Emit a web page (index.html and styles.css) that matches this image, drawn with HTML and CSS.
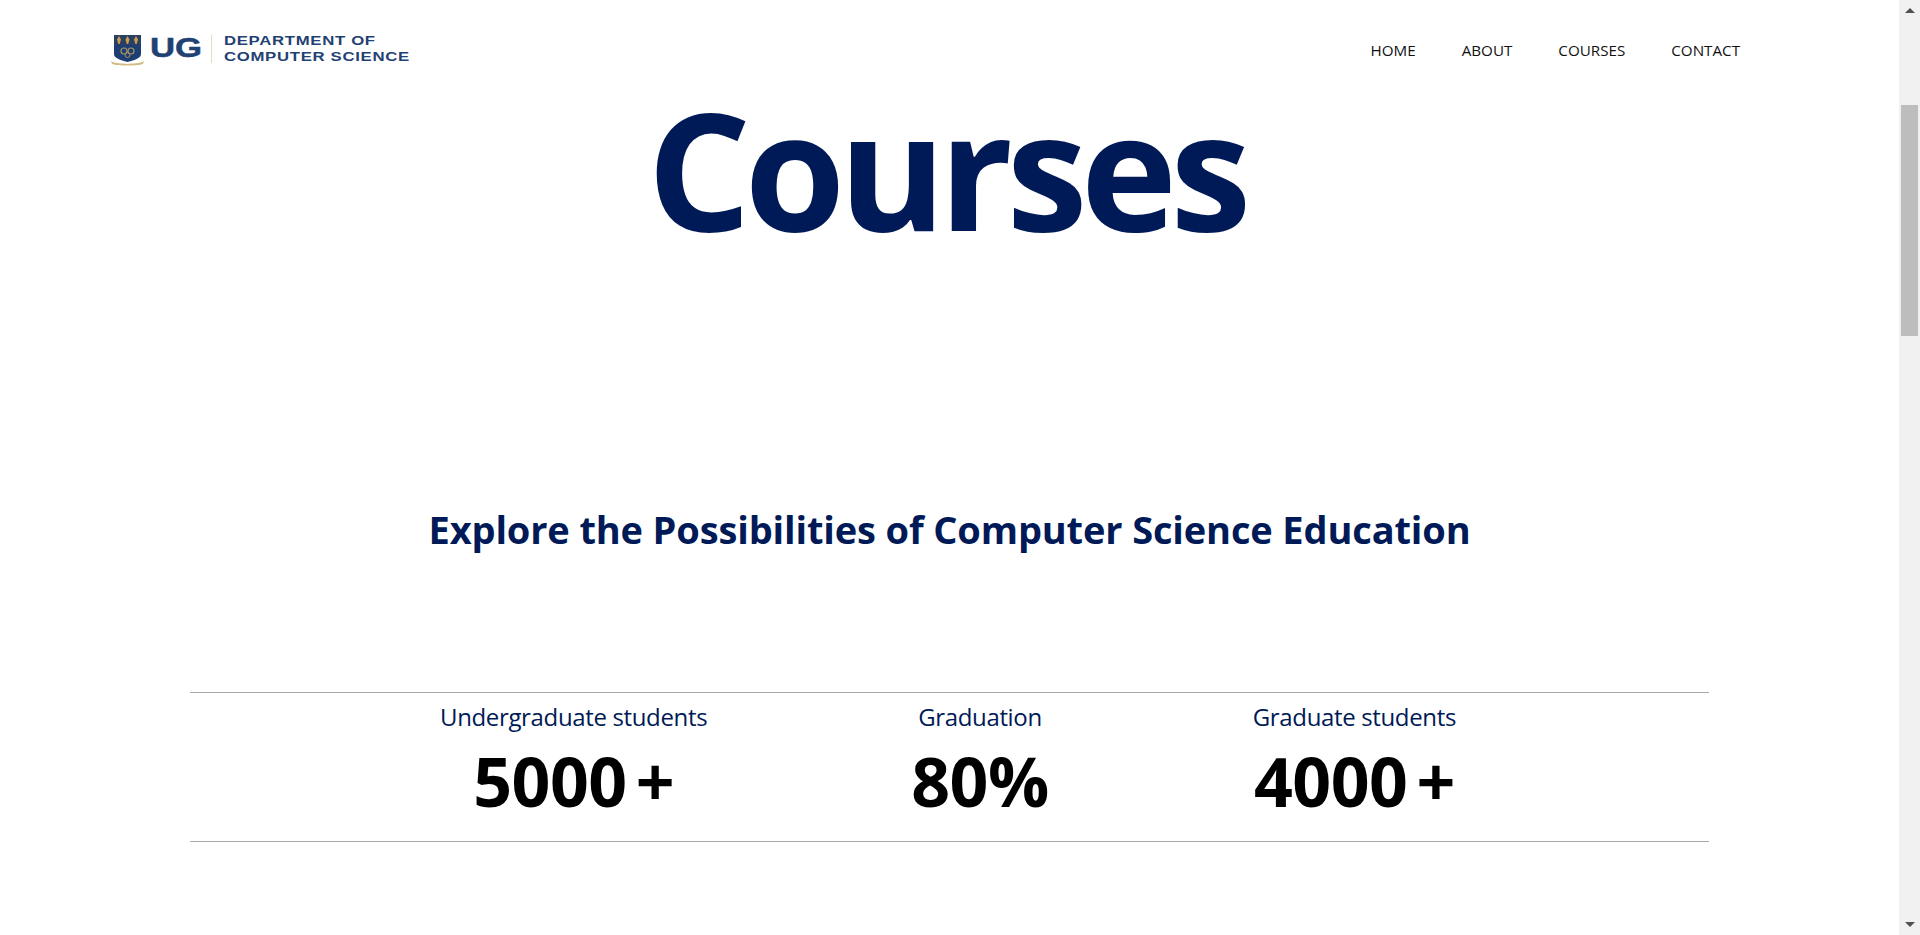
FILE: index.html
```html
<!DOCTYPE html>
<html lang="en">
<head>
<meta charset="utf-8">
<title>Courses</title>
<link rel="stylesheet" href="styles.css">
</head>
<body>
<div class="page">
  <main class="content">
    <header class="topbar">
      <a class="logo" href="#">
        <svg class="crest" viewBox="0 0 33 32" width="33" height="32" aria-hidden="true">
          <path d="M3 1H30V20C30 24 24 26 16.500 28C9 26 3 24 3 20Z" fill="#1d3e72"/>
          <path d="M3 1H30V11H3Z" fill="#2a3f63"/>
          <path d="M8 2L10 5.500L8.700 10H7.300L6 5.500ZM16.500 2L18.500 5.500L17.200 10H15.800L14.500 5.500ZM25 2L27 5.500L25.700 10H24.300L23 5.500Z" fill="#c6a050"/>
          <circle cx="13" cy="17" r="3" fill="none" stroke="#a8935f" stroke-width="1.200"/>
          <circle cx="20" cy="17" r="3" fill="none" stroke="#a8935f" stroke-width="1.200"/>
          <circle cx="16.500" cy="21" r="2.500" fill="none" stroke="#a8935f" stroke-width="1"/>
          <path d="M0 27C4 30 12 29 16.500 30C21 29 29 30 33 27L32 30C26 32 7 32 1 30Z" fill="#d3bc86"/>
        </svg>
        <span class="logo-ug">UG</span>
        <span class="logo-sep"></span>
        <span class="logo-dept">DEPARTMENT OF<br>COMPUTER SCIENCE</span>
      </a>
      <nav class="nav">
        <a href="#">HOME</a>
        <a href="#">ABOUT</a>
        <a href="#">COURSES</a>
        <a href="#">CONTACT</a>
      </nav>
    </header>
    <h1 class="title">Courses</h1>
    <h2 class="subtitle">Explore the Possibilities of Computer Science Education</h2>
    <section class="stats">
      <div class="stat">
        <div class="stat-label">Undergraduate students</div>
        <div class="stat-value">5000<span class="plus">+</span></div>
      </div>
      <div class="stat">
        <div class="stat-label">Graduation</div>
        <div class="stat-value">80%</div>
      </div>
      <div class="stat">
        <div class="stat-label">Graduate students</div>
        <div class="stat-value">4000<span class="plus">+</span></div>
      </div>
    </section>
  </main>
  <aside class="scrollbar" aria-hidden="true">
    <span class="arrow arrow-up"></span>
    <span class="thumb"></span>
    <span class="arrow arrow-down"></span>
  </aside>
</div>
</body>
</html>
```
FILE: styles.css
```css
* { box-sizing: border-box; }
html, body { margin: 0; height: 100%; overflow: hidden; background: #fff; }
body { font-family: "Open Sans", "Noto Sans", sans-serif; color: #000; }
a { color: inherit; text-decoration: none; }

.page { display: flex; height: 935px; }
.content { flex: 1; min-width: 0; display: flex; flex-direction: column; align-items: center; }

.topbar { align-self: stretch; height: 100px; display: flex; justify-content: space-between; align-items: center; padding: 0 159px 0 111px; }
.logo { display: flex; align-items: center; color: #1f4173; }
.crest { flex: none; }
.logo-ug { font: 700 28px/1 "Liberation Sans", sans-serif; margin: 0 8px 5px 6px; width: 44px; transform: scaleX(1.24); transform-origin: left; -webkit-text-stroke: .5px #1f4173; }
.logo-sep { width: 1px; height: 28px; background: #e6dcc3; margin: -3px 12px 0 9px; }
.logo-dept { font: 700 13.500px/16px "Liberation Sans", sans-serif; letter-spacing: .55px; transform: scaleX(1.24); transform-origin: left; margin-bottom: 2px; white-space: nowrap; }
.nav { display: flex; gap: 46px; font-size: 15.200px; color: #111; }

.title { margin: 0 7px 0 0; font-size: 163px; line-height: 136px; font-weight: 700; color: #001a57; letter-spacing: -6.700px; }
.subtitle { margin: 267px 0 0; font-size: 38px; line-height: 52px; font-weight: 700; color: #001a57; letter-spacing: -.14px; }

.stats { width: 1519px; height: 150px; margin-top: 137px; padding-right: 3px; display: flex; justify-content: center; gap: 204px; border-top: 1px solid #aaa; border-bottom: 1px solid #aaa; }
.stat { display: flex; flex-direction: column; align-items: center; }
.stat-label { font-size: 24px; line-height: 32px; margin-top: 8px; color: #001a57; letter-spacing: -.35px; }
.stat-value { font-size: 68px; line-height: 82px; font-weight: 700; margin-top: 7px; letter-spacing: -.5px; }
.plus { margin-left: 9px; }

.scrollbar { width: 21px; flex: none; background: #f0f0f0; display: flex; flex-direction: column; align-items: center; }
.arrow { width: 0; height: 0; border-left: 5px solid transparent; border-right: 5px solid transparent; }
.arrow-up { border-bottom: 5px solid #505050; margin-top: 8px; }
.arrow-down { border-top: 5px solid #505050; margin-top: auto; margin-bottom: 8px; }
.thumb { width: 17px; height: 231px; background: #bdbdbd; margin-top: 92px; }
```
